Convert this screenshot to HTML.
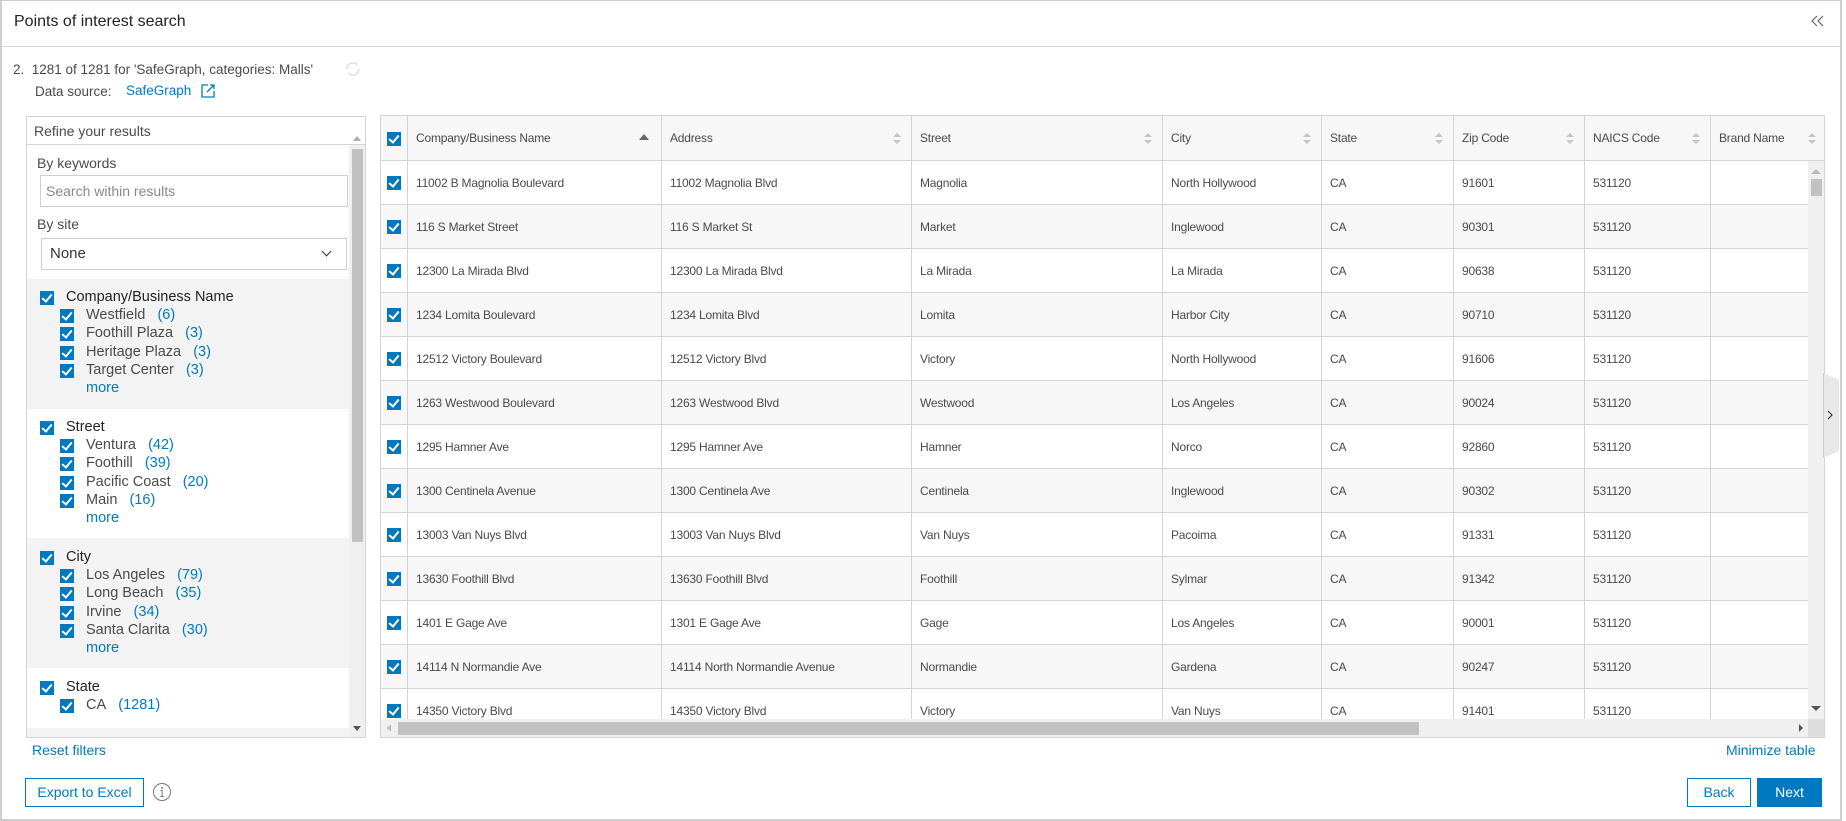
<!DOCTYPE html>
<html><head><meta charset="utf-8"><style>
*{box-sizing:border-box;margin:0;padding:0}
body{width:1846px;height:821px;background:#fff;font-family:"Liberation Sans",sans-serif;color:#4a4a4a;position:relative;overflow:hidden}
.a{position:absolute}
.frame{left:0;top:0;width:1842px;height:821px;border:2px solid #cfcfcf;border-top-width:1px}
.f{font-size:14.5px;color:#4a4a4a}
.blue{color:#0079c1 !important}
.cb{position:absolute;width:14px;height:14px;background:#0079c1}
.cb:after{content:"";position:absolute;left:4px;top:1px;width:4px;height:8px;border:solid #fff;border-width:0 2px 2px 0;transform:rotate(40deg)}
.tb{left:380px;top:115px;width:1445px;height:623px;border:1px solid #d4d4d4;overflow:hidden}
.hdr{position:absolute;left:0;top:0;height:45px;width:1445px;background:#f7f7f7;border-bottom:1px solid #d4d4d4}
.row{position:absolute;left:0;height:44px;width:1427px;border-bottom:1px solid #d4d4d4}
.c{position:absolute;top:0;height:100%;border-left:1px solid #d4d4d4;font-size:12px;line-height:44px;padding-left:8px;white-space:nowrap;color:#4a4a4a;letter-spacing:-0.2px}
.sort{position:absolute;right:10px;top:17px;width:8px;height:12px}
.sort:before{content:"";position:absolute;left:0;top:0;border:4px solid transparent;border-bottom:4px solid #c5c5c5;border-top:0}
.sort:after{content:"";position:absolute;left:0;top:7px;border:4px solid transparent;border-top:4px solid #c5c5c5;border-bottom:0}
.btn{position:absolute;height:29px;border:1px solid #0079c1;font-size:14px;line-height:27px;text-align:center}
</style></head><body>
<div class="a frame"></div>
<div class="a" style="left:14px;top:13px;font-size:16px;color:#222">Points of interest search</div>
<svg class="a" style="left:1810px;top:14px" width="16" height="14" viewBox="0 0 16 14"><path d="M7 2L2 7l5 5M13 2L8 7l5 5" fill="none" stroke="#666" stroke-width="1.2"/></svg>
<div class="a" style="left:1px;top:46px;width:1840px;height:1px;background:#d4d4d4"></div>
<div class="a" style="left:13px;top:62px;font-size:13.5px;color:#4a4a4a">2.&nbsp; 1281 of 1281 for 'SafeGraph, categories: Malls'</div>
<svg class="a" style="left:344px;top:60px" width="18" height="18" viewBox="0 0 18 18"><path d="M3 9a6 6 0 0 1 10.5-4M15 9a6 6 0 0 1-10.5 4" fill="none" stroke="#ddd" stroke-width="1.5"/></svg>
<div class="a" style="left:35px;top:84px;font-size:13.5px">Data source:</div>
<div class="a blue" style="left:126px;top:83px;font-size:13.5px">SafeGraph</div>
<svg class="a" style="left:200px;top:83px" width="16" height="16" viewBox="0 0 16 16"><path d="M8 2H2v12h12V8M10 2h4v4M14 2L7 9" fill="none" stroke="#0079c1" stroke-width="1.3"/></svg>

<div class="a" style="left:26px;top:116px;width:340px;height:622px;border:1px solid #d4d4d4;background:#f3f3f3;overflow:hidden">
 <div class="a" style="left:0;top:0;width:338px;height:28px;background:#fff;border-bottom:1px solid #d4d4d4;font-size:14px;line-height:28px;padding-left:7px">Refine your results</div>
 <div class="a" style="left:0;top:28px;width:322px;height:134px;background:#fff"></div>
 <div class="a" style="left:10px;top:38px;font-size:14px">By keywords</div>
 <div class="a" style="left:13px;top:58px;width:308px;height:32px;border:1px solid #cfcfcf;font-size:14px;line-height:30px;padding-left:5px;color:#888">Search within results</div>
 <div class="a" style="left:10px;top:99px;font-size:14px">By site</div>
 <div class="a" style="left:14px;top:121px;width:306px;height:32px;border:1px solid #cfcfcf;font-size:15px;line-height:30px;padding-left:8px;color:#333;background:#fff">None<span style="position:absolute;right:16px;top:9px;width:7px;height:7px;border:solid #333;border-width:0 1.5px 1.5px 0;transform:rotate(45deg)"></span></div>
 <div class="a" style="left:0;top:292px;width:322px;height:129px;background:#fff"></div>
 <div class="a" style="left:0;top:551px;width:322px;height:60px;background:#fff"></div>
 <div class="a" style="left:322px;top:28px;width:16px;height:594px;background:#f0f0f0"></div>
 <div class="a" style="left:325px;top:32px;width:11px;height:393px;background:#c1c1c1"></div>
 <div class="a" style="left:326px;top:19px;border:4px solid transparent;border-bottom:5px solid #aaa;border-top:0"></div>
 <div class="a" style="left:326px;top:609px;border:4px solid transparent;border-top:5px solid #555;border-bottom:0"></div>
</div>
<div id="groups"></div>

<div class="a tb">
 <div class="hdr"></div>
 <div id="tbl"></div>
 <div class="a" style="left:1427px;top:45px;width:17px;height:558px;background:#f0f0f0"></div>
 <div class="a" style="left:1430px;top:53px;border:5px solid transparent;border-bottom:5px solid #bbb;border-top:0"></div>
 <div class="a" style="left:1430px;top:63px;width:11px;height:17px;background:#c1c1c1"></div>
 <div class="a" style="left:1430px;top:590px;border:5px solid transparent;border-top:5px solid #555;border-bottom:0"></div>
 <div class="a" style="left:0;top:603px;width:1427px;height:18px;background:#f0f0f0"></div>
 <div class="a" style="left:1427px;top:603px;width:17px;height:18px;background:#ddd"></div>
 <div class="a" style="left:17px;top:606px;width:1021px;height:13px;background:#c1c1c1"></div>
 <div class="a" style="left:6px;top:608px;border:4px solid transparent;border-right:4px solid #bbb;border-left:0"></div>
 <div class="a" style="left:1418px;top:608px;border:4px solid transparent;border-left:4px solid #555;border-right:0"></div>
</div>
<div class="a" style="left:1823px;top:373px;width:16px;height:85px;background:#e8e8e8;border:1px solid #ccc;border-right:0;clip-path:polygon(0 0,100% 8%,100% 92%,0 100%)"></div>
<svg class="a" style="left:1826px;top:409px" width="8" height="12" viewBox="0 0 8 12"><path d="M2 2l4 4-4 4" fill="none" stroke="#333" stroke-width="1.2"/></svg>

<div class="a blue" style="left:32px;top:742px;font-size:14px">Reset filters</div>
<div class="a blue" style="left:1726px;top:742px;font-size:14px">Minimize table</div>
<div class="btn blue" style="left:25px;top:778px;width:119px">Export to Excel</div>
<svg class="a" style="left:152px;top:782px" width="20" height="20" viewBox="0 0 20 20"><circle cx="10" cy="10" r="8.5" fill="none" stroke="#777" stroke-width="1"/><circle cx="10" cy="5.8" r="1" fill="#777"/><path d="M8.5 8.5h1.7v6M8.3 14.5h3.6" fill="none" stroke="#777" stroke-width="1"/></svg>
<div class="btn blue" style="left:1687px;top:778px;width:64px">Back</div>
<div class="btn" style="left:1757px;top:778px;width:65px;background:#0079c1;color:#fff">Next</div>

<script>
var g=[["Company/Business Name",298,[["Westfield",6],["Foothill Plaza",3],["Heritage Plaza",3],["Target Center",3]]],
["Street",428,[["Ventura",42],["Foothill",39],["Pacific Coast",20],["Main",16]]],
["City",558,[["Los Angeles",79],["Long Beach",35],["Irvine",34],["Santa Clarita",30]]],
["State",688,[["CA",1281]]]];
var h="";
g.forEach(function(x){var y=x[1];
h+='<div class="cb" style="left:40px;top:'+(y-7)+'px"></div><div class="a f" style="left:66px;top:'+(y-9)+'px;color:#222">'+x[0]+'</div>';
x[2].forEach(function(it,i){var yy=Math.round(y+18+i*18.3);
h+='<div class="cb" style="left:60px;top:'+(yy-7)+'px"></div><div class="a f" style="left:86px;top:'+(yy-9)+'px">'+it[0]+'&nbsp;&nbsp; <span class="blue">('+it[1]+')</span></div>';});
if(x[2].length>1)h+='<div class="a f blue" style="left:86px;top:'+Math.round(y+18+4*18.3-9)+'px">more</div>';});
document.getElementById("groups").innerHTML=h;
var cols=[0,26,280,530,781,940,1072,1203,1329,1445];
var hn=["","Company/Business Name","Address","Street","City","State","Zip Code","NAICS Code","Brand Name"];
var rows=[["11002 B Magnolia Boulevard","11002 Magnolia Blvd","Magnolia","North Hollywood","91601"],
["116 S Market Street","116 S Market St","Market","Inglewood","90301"],
["12300 La Mirada Blvd","12300 La Mirada Blvd","La Mirada","La Mirada","90638"],
["1234 Lomita Boulevard","1234 Lomita Blvd","Lomita","Harbor City","90710"],
["12512 Victory Boulevard","12512 Victory Blvd","Victory","North Hollywood","91606"],
["1263 Westwood Boulevard","1263 Westwood Blvd","Westwood","Los Angeles","90024"],
["1295 Hamner Ave","1295 Hamner Ave","Hamner","Norco","92860"],
["1300 Centinela Avenue","1300 Centinela Ave","Centinela","Inglewood","90302"],
["13003 Van Nuys Blvd","13003 Van Nuys Blvd","Van Nuys","Pacoima","91331"],
["13630 Foothill Blvd","13630 Foothill Blvd","Foothill","Sylmar","91342"],
["1401 E Gage Ave","1301 E Gage Ave","Gage","Los Angeles","90001"],
["14114 N Normandie Ave","14114 North Normandie Avenue","Normandie","Gardena","90247"],
["14350 Victory Blvd","14350 Victory Blvd","Victory","Van Nuys","91401"]];
var t='<div class="cb" style="left:6px;top:16px"></div>';
for(var i=1;i<9;i++){t+='<div class="c" style="left:'+cols[i]+'px;width:'+(cols[i+1]-cols[i])+'px;height:44px;line-height:44px">'+hn[i]+(i==1?'<span style="position:absolute;right:12px;top:18px;border:5px solid transparent;border-bottom:6px solid #666;border-top:0"></span>':'<span class="sort"></span>')+'</div>';}
rows.forEach(function(r,k){var y=45+k*44;
t+='<div class="row" style="top:'+y+'px;background:'+(k%2?'#f7f7f7':'#fff')+'"><div class="cb" style="left:6px;top:15px"></div>';
var v=[r[0],r[1],r[2],r[3],"CA",r[4],"531120",""];
for(var i=1;i<9;i++){var w=(i==8?1427:cols[i+1])-cols[i];t+='<div class="c" style="left:'+cols[i]+'px;width:'+w+'px">'+v[i-1]+'</div>';}
t+='</div>';});
document.getElementById("tbl").innerHTML=t;
</script>
</body></html>
